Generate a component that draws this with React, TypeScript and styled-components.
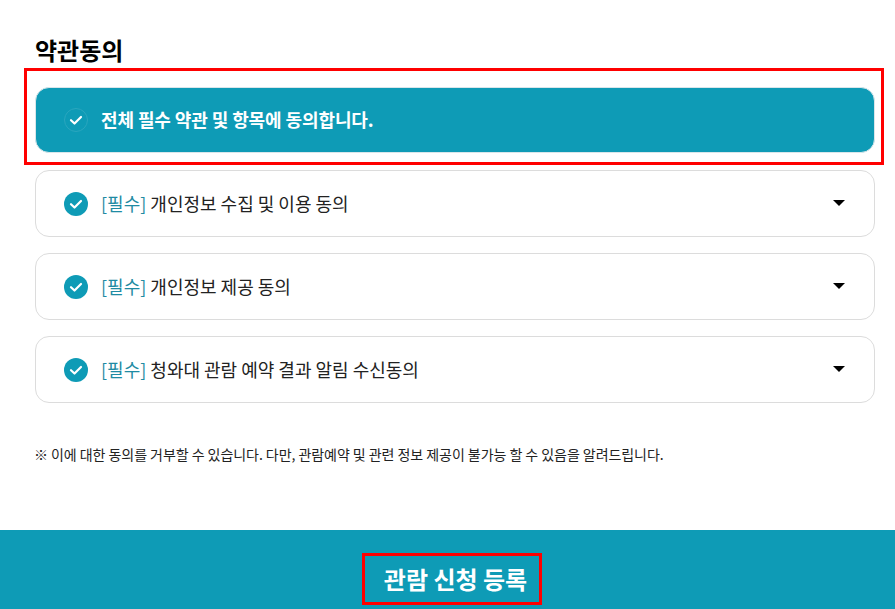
import React from "react"
import styled, { createGlobalStyle } from "styled-components"

const teal = "#0e9bb6"

const GlobalStyle = createGlobalStyle`
  html, body {
    margin: 0;
    padding: 0;
    background: #ffffff;
    overflow: hidden;
  }
  * {
    box-sizing: border-box;
  }
  body {
    font-family: "Noto Sans CJK KR", "Noto Sans", sans-serif;
  }
`

const Page = styled.div`
  height: 609px;
  overflow: hidden;
  display: flex;
  flex-direction: column;
`

const Content = styled.main`
  flex: 1;
  padding: 35px 20px 0 35px;
`

const Title = styled.h2`
  margin: 0;
  height: 33px;
  font-size: 24px;
  line-height: 30px;
  font-weight: 700;
  color: #000000;
`

const Highlight = styled.div`
  margin: 0 -9px 5px -11px;
  padding: 16px 6px 9px 8px;
  border: 3px solid #ff0000;
`

const AllAgree = styled.label`
  display: flex;
  align-items: center;
  gap: 13px;
  height: 66px;
  padding: 0 28px 2px;
  border-radius: 14px;
  border: 1px solid #d9e6ea;
  background: ${teal};
  color: #ffffff;
  font-size: 18px;
  letter-spacing: -0.1px;
  font-weight: 700;
`

const List = styled.div`
  display: flex;
  flex-direction: column;
  gap: 16px;
`

const Row = styled.div`
  display: flex;
  align-items: center;
  gap: 13px;
  height: 67px;
  padding: 0 29px 2px 28px;
  border: 1px solid #dcdcdc;
  border-radius: 14px;
  background: #ffffff;
  color: #222222;
  font-size: 18px;
`

const Check = styled.span<{ $ghost?: boolean }>`
  flex: none;
  width: 24px;
  height: 24px;
  margin-top: 2px;
  border-radius: 50%;
  display: flex;
  align-items: center;
  justify-content: center;
  background: ${p => (p.$ghost ? "transparent" : teal)};
  border: ${p => (p.$ghost ? "1px solid #2aa6be" : "none")};
`

const Required = styled.span`
  color: #1f8ba3;
`

const RowLabel = styled.span`
  flex: 1;
`

const Caret = styled.span`
  width: 0;
  height: 0;
  margin-left: -1px;
  border-left: 6.5px solid transparent;
  border-right: 6.5px solid transparent;
  border-top: 6px solid #000000;
`

const Notice = styled.p`
  margin: 41px 0 0 -1px;
  font-size: 14px;
  line-height: 20px;
  letter-spacing: -0.05px;
  color: #222222;
`

const Footer = styled.footer`
  flex: none;
  height: 79px;
  background: ${teal};
  display: flex;
  justify-content: center;
  padding-top: 23px;
`

const SubmitBox = styled.div`
  width: 180px;
  height: 52px;
  margin-left: 9px;
  padding: 0 0 2px 7px;
  border: 3px solid #ff0000;
  display: flex;
  align-items: center;
  justify-content: center;
  color: #ffffff;
  font-size: 24px;
  font-weight: 700;
`

const CheckMark = () => (
  <svg width="14" height="14" viewBox="0 0 14 14" fill="none">
    <path d="M2 7.2 5.5 10.5 12 4" stroke="#ffffff" strokeWidth="2.2" strokeLinecap="round" strokeLinejoin="round" />
  </svg>
)

const terms = ["개인정보 수집 및 이용 동의", "개인정보 제공 동의", "청와대 관람 예약 결과 알림 수신동의"]

export default function App() {
  return (
    <Page>
      <GlobalStyle />
      <Content>
        <Title>약관동의</Title>
        <Highlight>
          <AllAgree>
            <Check $ghost>
              <CheckMark />
            </Check>
            전체 필수 약관 및 항목에 동의합니다.
          </AllAgree>
        </Highlight>
        <List>
          {terms.map(term => (
            <Row key={term}>
              <Check>
                <CheckMark />
              </Check>
              <RowLabel>
                <Required>[필수]</Required> {term}
              </RowLabel>
              <Caret />
            </Row>
          ))}
        </List>
        <Notice>※ 이에 대한 동의를 거부할 수 있습니다. 다만, 관람예약 및 관련 정보 제공이 불가능 할 수 있음을 알려드립니다.</Notice>
      </Content>
      <Footer>
        <SubmitBox>관람 신청 등록</SubmitBox>
      </Footer>
    </Page>
  )
}
